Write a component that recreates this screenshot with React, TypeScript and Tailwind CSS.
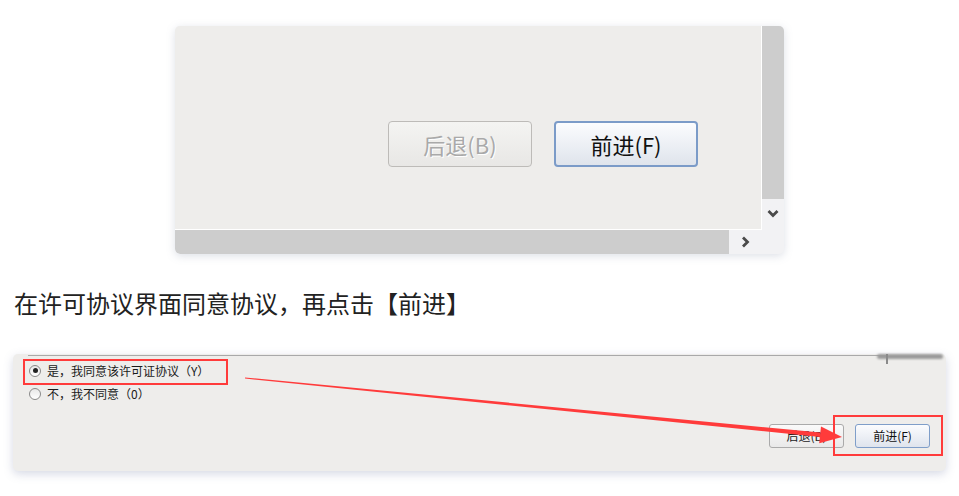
import React from "react";

const cjk = "font-['Noto_Sans_CJK_SC','Noto_Sans',sans-serif]";

const ScrollDemo = () => {
  return (
    <div className="mx-auto mt-[26px] w-[609px] h-[228px] rounded-[5px] overflow-hidden shadow-[0_2px_8px_rgba(120,130,160,0.25)] bg-[#f2f2f4] flex flex-col">
      <div className="flex h-[204px]">
        {/* content */}
        <div className="flex-1 bg-[#eeedeb] border-r border-b border-white flex justify-end items-start pt-[95px] pr-[63px] gap-[22px]">
          <div
            className={`w-[144px] h-[46px] rounded-[4px] border border-[#bdbbb8] bg-gradient-to-b from-[#f4f4f2] to-[#e8e7e5] flex items-center justify-center text-[22px] text-[#a9a9a9] [text-shadow:1px_1px_0_#ffffff] ${cjk}`}
          >
            后退(B)
          </div>
          <div
            className={`w-[144px] h-[46px] rounded-[4px] border-2 border-[#7b9bc8] bg-gradient-to-b from-[#fbfcfe] to-[#dfe4ec] flex items-center justify-center text-[22px] text-[#111] ${cjk}`}
          >
            前进(F)
          </div>
        </div>
        {/* vertical scrollbar */}
        <div className="w-[22px] flex flex-col">
          <div className="h-[173px] bg-[#cdcdcd]" />
          <div className="flex-1 flex items-start justify-center pt-[10px]">
            <svg width="12" height="10" viewBox="0 0 12 10">
              <path d="M1.5 2 L6 6.5 L10.5 2" fill="none" stroke="#4a4a4a" strokeWidth="2.8" />
            </svg>
          </div>
        </div>
      </div>
      {/* horizontal scrollbar */}
      <div className="flex flex-1">
        <div className="w-[554px] bg-[#cdcdcd] rounded-bl-[5px]" />
        <div className="flex-1 flex items-center pl-[12px]">
          <svg width="10" height="12" viewBox="0 0 10 12">
            <path d="M2 1.5 L6.5 6 L2 10.5" fill="none" stroke="#4a4a4a" strokeWidth="2.8" />
          </svg>
        </div>
      </div>
    </div>
  );
};

const Radio = ({ checked, label }: { checked?: boolean; label: string }) => (
  <div className="flex items-center h-[23px]">
    <div className="w-[12px] h-[12px] rounded-full border border-[#8a8a8a] bg-gradient-to-b from-[#e8e8e8] to-white flex items-center justify-center">
      {checked && <div className="w-[5px] h-[5px] rounded-full bg-[#222]" />}
    </div>
    <span className={`ml-[6px] text-[12px] text-[#1a1a1a] ${cjk}`}>{label}</span>
  </div>
);

const LicenseDemo = () => {
  return (
    <div className="relative mx-[13px] mt-[35px] h-[117px] rounded-[5px] bg-[#eeedeb] shadow-[0_3px_10px_rgba(120,130,170,0.3)]">
      {/* top edge line */}
      <div className="absolute left-[15px] right-[60px] top-[1px] h-px bg-[#a9a9a9]" />
      <div className="absolute right-[3px] top-0 w-[66px] h-[5px] bg-[#9a9a9a] blur-[1px] rounded-sm" />
      <div className="absolute right-[58px] top-0 w-[2px] h-[10px] bg-[#8a8a8a] blur-[0.5px]" />

      <div className="pl-[16px] pt-[5px]">
        <Radio checked label="是，我同意该许可证协议（Y）" />
        <Radio label="不，我不同意（0）" />
      </div>

      <div className="absolute right-[16px] bottom-[23px] flex gap-[11px]">
        <div
          className={`w-[75px] h-[24px] rounded-[3px] border border-[#aaa] bg-gradient-to-b from-[#fafafa] to-[#e9e9e9] flex items-center justify-center text-[12px] text-[#222] ${cjk}`}
        >
          后退(B)
        </div>
        <div
          className={`w-[75px] h-[24px] rounded-[3px] border border-[#7f9ec9] bg-gradient-to-b from-[#fbfcfe] to-[#dfe4ed] flex items-center justify-center text-[12px] text-[#111] ${cjk}`}
        >
          前进(F)
        </div>
      </div>

      {/* highlight boxes */}
      <div className="absolute left-[10px] top-[5px] w-[205px] h-[26px] border-2 border-[#ff3b3b]" />
      <div className="absolute left-[820px] top-[61px] w-[110px] h-[41px] border-2 border-[#ff3b3b]" />

      {/* arrow */}
      <svg className="absolute left-0 top-0" width="935" height="117" viewBox="0 0 935 117">
        <polygon
          points="232,23.4 807.3,78.6 806.9,82.9 232,24.6"
          fill="#ff3b3b"
        />
        <polygon points="829,83 808,72.4 806.2,89.2" fill="#ff3b3b" />
      </svg>
    </div>
  );
};

export default function App() {
  return (
    <div className="w-[959px] h-[496px] bg-white overflow-hidden">
      <ScrollDemo />
      <p className={`mt-[33px] ml-[14px] text-[24px] leading-[32px] text-[#222] ${cjk}`}>
        在许可协议界面同意协议，再点击【前进】
      </p>
      <LicenseDemo />
    </div>
  );
}
